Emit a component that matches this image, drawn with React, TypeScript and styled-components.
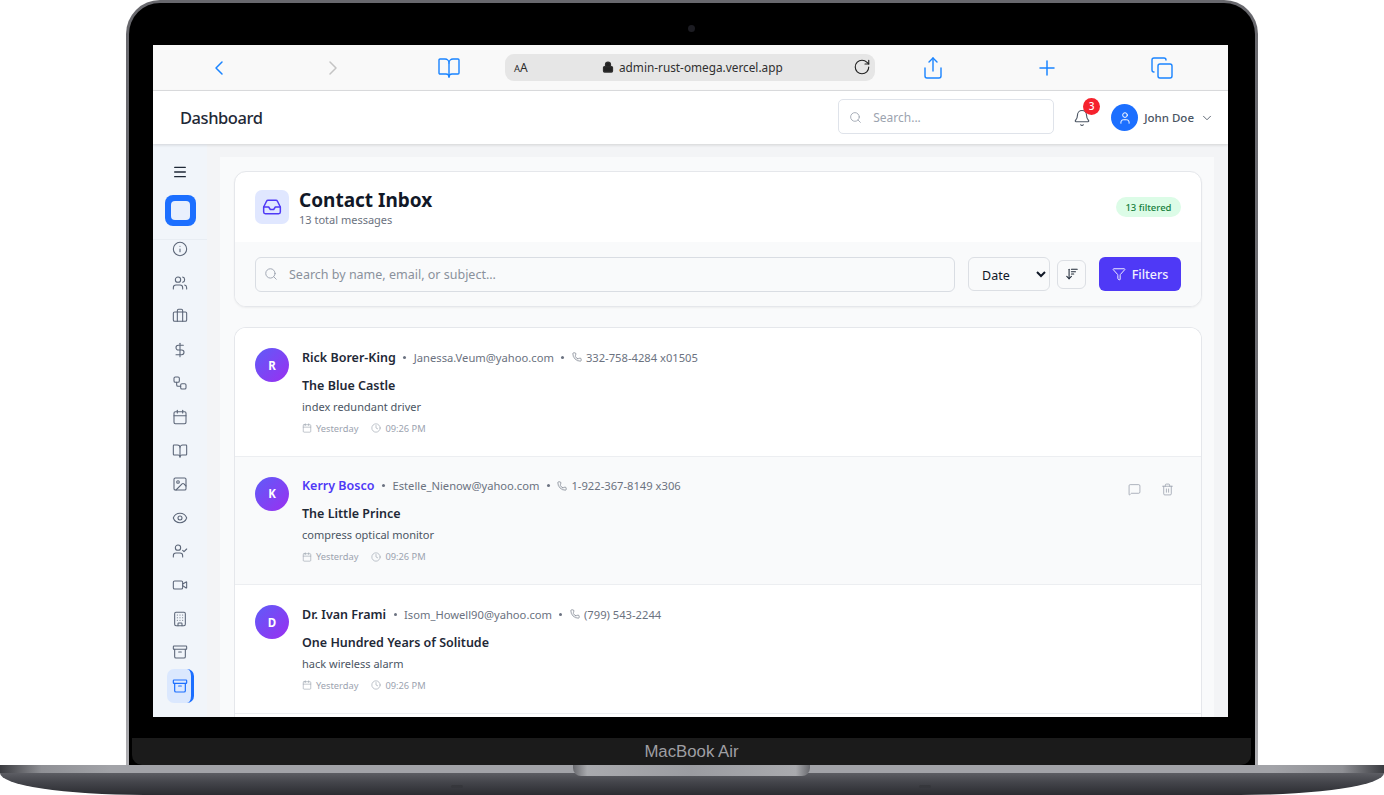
import styled, { createGlobalStyle } from "styled-components";
import {
  Archive, ArrowDownWideNarrow, Bell, BookOpen, Briefcase, Building, Calendar, ChevronDown, ChevronLeft, ChevronRight,
  Clock, Copy, DollarSign, Eye, Filter, Image, Inbox, Info, Lock, Menu, MessageSquare, Phone, Plus, RotateCw, Search,
  Share, Trash2, User, UserCheck, Users, Video, Workflow,
} from "lucide-react";

const GlobalStyle = createGlobalStyle`
  html, body { margin: 0; padding: 0; background: #fff; overflow: hidden; }
  body { font-family: "Noto Sans", "Liberation Sans", sans-serif; }
  * { box-sizing: border-box; }
`;

const Stage = styled.div`
  width: 1384px;
  height: 795px;
  display: flex;
  flex-direction: column;
  align-items: center;
  position: relative;
  overflow: hidden;
`;

const Lid = styled.div`
  width: 1132px;
  height: 765px;
  flex: none;
  border: 3px solid transparent;
  border-bottom: 0;
  border-radius: 34px 34px 0 0;
  background: linear-gradient(#000, #000) padding-box, linear-gradient(180deg, #68686d, #707075 70%, #b0b0b4) border-box;
  padding: 42px 27px 0 24px;
  display: flex;
  flex-direction: column;
  position: relative;
`;

const Camera = styled.span`
  position: absolute;
  top: 22px;
  left: 559px;
  width: 7px;
  height: 7px;
  border-radius: 50%;
  background: #1c1c22;
`;

const Screen = styled.div`
  height: 672px;
  flex: none;
  background: #fff;
  display: flex;
  flex-direction: column;
  overflow: hidden;
`;

const Chin = styled.div`
  margin: 21px -23px 0 -21px;
  height: 27px;
  background: #1b1b1b;
  border-radius: 0 0 10px 10px;
  display: flex;
  align-items: center;
  justify-content: center;
  color: #9f9fa3;
  font-family: "Liberation Sans", sans-serif;
  font-size: 16.8px;
`;

const Base = styled.div`
  width: 1384px;
  height: 30px;
  flex: none;
  position: relative;
`;

const BaseStrip = styled.div`
  height: 8px;
  background: linear-gradient(90deg, #3a3b40 0, #8f9095 3%, #a2a3a8 8%, #a2a3a8 92%, #8f9095 97%, #3a3b40 100%);
`;

const BaseBody = styled.div`
  height: 22px;
  background: linear-gradient(180deg, #5c5d63 0, #45464c 40%, #2b2c31 100%);
  border-radius: 0 0 150px 150px / 0 0 23px 23px;
`;

const Notch = styled.div`
  position: absolute;
  top: 0;
  left: 573px;
  width: 237px;
  height: 11px;
  border-radius: 0 0 8px 8px;
  background: linear-gradient(90deg, #68696e 0, #a9aaae 6%, #9b9ca1 50%, #a9aaae 94%, #68696e 100%);
`;

const Pin = styled.span<{ $left: number }>`
  position: absolute;
  top: 20px;
  left: ${(p) => p.$left}px;
  width: 12px;
  height: 3px;
  border-radius: 2px;
  background: #36373c;
`;

const BrowserBar = styled.div`
  height: 46px;
  flex: none;
  background: #f9f9f9;
  border-bottom: 1px solid #dedfe1;
  display: grid;
  grid-template-columns: 352px 370px 1fr;
  align-items: center;
  color: #1a84ff;
`;

const BarGroup = styled.div<{ $pad: number }>`
  display: flex;
  align-items: center;
  gap: 90px;
  padding-left: ${(p) => p.$pad}px;
`;

const BookIcon = styled(BookOpen)`
  margin-left: 2px;
`;

const TabsIcon = styled(Copy)`
  margin-left: 1px;
`;

const UrlBox = styled.div`
  height: 27px;
  margin-top: -1px;
  background: #e6e6e6;
  border-radius: 9px;
  color: #2b2b2b;
  display: flex;
  align-items: center;
  padding: 0 4px 0 9px;
  font-size: 11.8px;
`;

const AaLabel = styled.span`
  width: 88px;
  flex: none;
  font-size: 12px;
  & small { font-size: 9.5px; }
`;

const UrlText = styled.span`
  display: flex;
  align-items: center;
  gap: 5px;
  flex: 1;
  color: #303030;
`;

const TopHeader = styled.header`
  height: 53px;
  flex: none;
  background: #fff;
  display: flex;
  align-items: center;
  padding: 0 13px 0 27px;
  box-shadow: 0 1px 3px rgba(0, 0, 0, 0.14);
  position: relative;
  z-index: 2;
`;

const PageTitle = styled.h1`
  margin: 0;
  font-size: 16.5px;
  letter-spacing: -0.45px;
  font-weight: 500;
  color: #1f2937;
  flex: 1;
`;

const HeaderSearch = styled.div`
  width: 216px;
  height: 35px;
  margin-bottom: 2px;
  border: 1px solid #dfe3ea;
  border-radius: 5px;
  display: flex;
  align-items: center;
  gap: 11px;
  padding: 2px 10px 0;
  color: #9ca3af;
  font-size: 12px;
`;

const BellWrap = styled.div`
  margin-left: 19px;
  width: 18px;
  height: 18px;
  color: #4b5563;
  position: relative;
`;

const BellBadge = styled.span`
  position: absolute;
  top: -11px;
  left: 10px;
  width: 17px;
  height: 17px;
  border-radius: 50%;
  background: #f5222d;
  color: #fff;
  font-size: 10px;
  font-weight: 500;
  display: flex;
  align-items: center;
  justify-content: center;
`;

const UserMenu = styled.div`
  margin-left: 20px;
  display: flex;
  align-items: center;
  color: #4b5563;
  font-size: 11.5px;
  font-weight: 500;
`;

const UserAvatar = styled.span`
  width: 27px;
  height: 27px;
  border-radius: 50%;
  background: #1c6fff;
  color: #fff;
  display: flex;
  align-items: center;
  justify-content: center;
  margin-right: 6px;
`;

const UserChevron = styled(ChevronDown)`
  margin: 0 1px 0 6px;
`;

const Body = styled.div`
  flex: 1;
  min-height: 0;
  display: flex;
`;

const Sidebar = styled.nav`
  width: 54px;
  flex: none;
  background: #f1f5fa;
  display: flex;
  flex-direction: column;
  align-items: center;
  color: #5b6577;
`;

const SideTop = styled.div`
  width: 100%;
  height: 96px;
  flex: none;
  border-bottom: 1px solid #e8edf3;
  display: flex;
  flex-direction: column;
  align-items: center;
  padding-top: 20px;
  color: #1f2937;
`;

const Logo = styled.div`
  margin-top: 15px;
  width: 31px;
  height: 31px;
  border-radius: 8px;
  background: #1c6fff;
  display: flex;
  align-items: center;
  justify-content: center;
  &::after {
    content: "";
    width: 19px;
    height: 19px;
    border-radius: 4px;
    background: #e9f0fd;
  }
`;

const SideList = styled.div`
  display: flex;
  flex-direction: column;
  align-items: center;
  gap: 17.62px;
  padding-top: 1px;
`;

const SideItem = styled.div<{ $active?: boolean }>`
  width: 16px;
  height: 16px;
  display: flex;
  align-items: center;
  justify-content: center;
  position: relative;
  color: ${(p) => (p.$active ? "#1c6fff" : "inherit")};
  &::before {
    content: ${(p) => (p.$active ? '""' : "none")};
    position: absolute;
    inset: -9px -6px -9px -5px;
    border-radius: 7px;
    background: #dbe8fe;
    border-right: 3px solid #1c6fff;
  }
  & > svg {
    position: relative;
  }
`;

const Main = styled.main`
  flex: 1;
  min-width: 0;
  background: #f3f4f6;
  padding: 13px 14px 0 13px;
  display: flex;
`;

const Content = styled.div`
  flex: 1;
  background: #f9fafb;
  padding: 14px 12px 0 14px;
  display: flex;
  flex-direction: column;
  gap: 20px;
`;

const InboxCard = styled.section`
  height: 136px;
  flex: none;
  background: #fff;
  border: 1px solid #e5e7eb;
  border-radius: 12px;
  overflow: hidden;
  box-shadow: 0 1px 2px rgba(0, 0, 0, 0.05);
  display: flex;
  flex-direction: column;
`;

const InboxHead = styled.div`
  height: 70px;
  flex: none;
  display: flex;
  align-items: center;
  padding: 0 20px;
`;

const InboxIcon = styled.div`
  width: 34px;
  height: 34px;
  border-radius: 7px;
  background: #e0e7ff;
  color: #4f39f6;
  display: flex;
  align-items: center;
  justify-content: center;
  margin-right: 10px;
`;

const InboxTitles = styled.div`
  flex: 1;
  padding-top: 2px;
`;

const InboxTitle = styled.h2`
  margin: 0;
  font-size: 19px;
  line-height: 23px;
  font-weight: 700;
  color: #111827;
`;

const InboxSub = styled.div`
  font-size: 11px;
  line-height: 15px;
  color: #6b7280;
`;

const CountPill = styled.span`
  height: 20px;
  padding: 0 9.5px;
  border-radius: 10px;
  background: #dcfce7;
  color: #15803d;
  font-size: 9.5px;
  font-weight: 500;
  display: flex;
  align-items: center;
`;

const FilterBar = styled.div`
  flex: 1;
  background: #f9fafb;
  display: flex;
  align-items: center;
  padding: 0 20px;
`;

const SearchField = styled.div`
  flex: 1;
  height: 35px;
  border: 1px solid #d9dde3;
  border-radius: 6px;
  display: flex;
  align-items: center;
  gap: 11px;
  padding: 0 8px;
  color: #8a919c;
  font-size: 12.5px;
  background: #f9fafb;
`;

const SortSelect = styled.select`
  width: 82px;
  height: 34px;
  margin-left: 13px;
  border: 1px solid #dcdfe4;
  border-radius: 6px;
  background: #f9fafb;
  color: #111827;
  font-family: inherit;
  font-size: 12.5px;
  padding: 2px 9px 0;
`;

const SortButton = styled.button`
  width: 29px;
  height: 29px;
  margin-left: 7px;
  border: 1px solid #dcdfe4;
  border-radius: 6px;
  background: #f9fafb;
  color: #1f2937;
  display: flex;
  align-items: center;
  justify-content: center;
  padding: 0;
`;

const FilterButton = styled.button`
  width: 82px;
  height: 34px;
  margin-left: 13px;
  border: 0;
  border-radius: 6px;
  background: #4f39f6;
  color: #f2f0ff;
  font-family: inherit;
  font-size: 12.5px;
  font-weight: 500;
  display: flex;
  align-items: center;
  justify-content: center;
  gap: 6px;
  padding: 0;
`;

const MessageCard = styled.section`
  flex: 1;
  background: #fff;
  border: 1px solid #e5e7eb;
  border-bottom: 0;
  border-radius: 12px 12px 0 0;
  overflow: hidden;
`;

const Row = styled.article<{ $hover?: boolean }>`
  height: 128.5px;
  padding: 20px;
  display: flex;
  gap: 13px;
  background: ${(p) => (p.$hover ? "#f9fafb" : "#fff")};
  border-bottom: 1px solid #eceef1;
  position: relative;
`;

const Avatar = styled.span`
  width: 34px;
  height: 34px;
  flex: none;
  border-radius: 50%;
  background: linear-gradient(135deg, #5f5cf8, #9a2ff0);
  color: #fff;
  font-size: 11.5px;
  font-weight: 700;
  display: flex;
  align-items: center;
  justify-content: center;
`;

const RowBody = styled.div`
  display: flex;
  flex-direction: column;
  min-width: 0;
`;

const TopLine = styled.div`
  height: 20px;
  display: flex;
  align-items: center;
  font-size: 11.2px;
  color: #6b7280;
`;

const SenderName = styled.span<{ $hover?: boolean }>`
  font-size: 12.5px;
  font-weight: 600;
  color: ${(p) => (p.$hover ? "#4f39f6" : "#1f2937")};
`;

const Dot = styled.span`
  width: 3px;
  height: 3px;
  border-radius: 50%;
  background: #6b7280;
  margin: 0 7.5px;
`;

const PhoneText = styled.span`
  display: flex;
  align-items: center;
  gap: 4px;
`;

const Subject = styled.div`
  margin-top: 9px;
  line-height: 20px;
  font-size: 12.5px;
  font-weight: 600;
  color: #1f2937;
`;

const Preview = styled.div`
  margin-top: 2px;
  line-height: 18px;
  font-size: 11px;
  color: #4b5563;
`;

const MetaLine = styled.div`
  margin-top: 5px;
  display: flex;
  align-items: center;
  gap: 4px;
  height: 16px;
  color: #9ca3af;
  font-size: 9.3px;
`;

const MetaGap = styled.span`
  width: 5px;
`;

const RowActions = styled.div`
  position: absolute;
  top: 26px;
  right: 27px;
  display: flex;
  gap: 20px;
  color: #9ca3af;
`;

const sideIcons = [Info, Users, Briefcase, DollarSign, Workflow, Calendar, BookOpen, Image, Eye, UserCheck, Video, Building, Archive];

const messages = [
  { name: "Rick Borer-King", email: "Janessa.Veum@yahoo.com", phone: "332-758-4284 x01505", subject: "The Blue Castle", preview: "index redundant driver" },
  { name: "Kerry Bosco", email: "Estelle_Nienow@yahoo.com", phone: "1-922-367-8149 x306", subject: "The Little Prince", preview: "compress optical monitor", hover: true },
  { name: "Dr. Ivan Frami", email: "Isom_Howell90@yahoo.com", phone: "(799) 543-2244", subject: "One Hundred Years of Solitude", preview: "hack wireless alarm" },
];

export default function App() {
  return (
    <Stage>
      <GlobalStyle />
      <Lid>
        <Camera />
        <Screen>
          <BrowserBar>
            <BarGroup $pad={54}>
              <ChevronLeft size={24} strokeWidth={1.5} />
              <ChevronRight size={24} strokeWidth={1.5} color="#c4c4c4" />
              <BookIcon size={24} strokeWidth={1.4} />
            </BarGroup>
            <UrlBox>
              <AaLabel>
                <small>A</small>A
              </AaLabel>
              <UrlText>
                <Lock size={12} strokeWidth={2.5} fill="#222" />
                admin-rust-omega.vercel.app
              </UrlText>
              <RotateCw size={18} strokeWidth={1.5} color="#222" />
            </UrlBox>
            <BarGroup $pad={46}>
              <Share size={24} strokeWidth={1.4} />
              <Plus size={24} strokeWidth={1.5} />
              <TabsIcon size={24} strokeWidth={1.4} />
            </BarGroup>
          </BrowserBar>
          <TopHeader>
            <PageTitle>Dashboard</PageTitle>
            <HeaderSearch>
              <Search size={13} strokeWidth={1.6} />
              Search...
            </HeaderSearch>
            <BellWrap>
              <Bell size={18} strokeWidth={1.5} />
              <BellBadge>3</BellBadge>
            </BellWrap>
            <UserMenu>
              <UserAvatar>
                <User size={14} strokeWidth={1.7} />
              </UserAvatar>
              John Doe
              <UserChevron size={14} strokeWidth={1.5} />
            </UserMenu>
          </TopHeader>
          <Body>
            <Sidebar>
              <SideTop>
                <Menu size={16} strokeWidth={2} />
                <Logo />
              </SideTop>
              <SideList>
                {sideIcons.map((Icon, i) => (
                  <SideItem key={i}>
                    <Icon size={16} strokeWidth={1.6} />
                  </SideItem>
                ))}
                <SideItem $active>
                  <Archive size={16} strokeWidth={1.8} />
                </SideItem>
              </SideList>
            </Sidebar>
            <Main>
              <Content>
                <InboxCard>
                  <InboxHead>
                    <InboxIcon>
                      <Inbox size={20} strokeWidth={1.8} />
                    </InboxIcon>
                    <InboxTitles>
                      <InboxTitle>Contact Inbox</InboxTitle>
                      <InboxSub>13 total messages</InboxSub>
                    </InboxTitles>
                    <CountPill>13 filtered</CountPill>
                  </InboxHead>
                  <FilterBar>
                    <SearchField>
                      <Search size={14} strokeWidth={1.6} color="#9ca3af" />
                      Search by name, email, or subject...
                    </SearchField>
                    <SortSelect defaultValue="date">
                      <option value="date">Date</option>
                    </SortSelect>
                    <SortButton>
                      <ArrowDownWideNarrow size={14} strokeWidth={1.8} />
                    </SortButton>
                    <FilterButton>
                      <Filter size={14} strokeWidth={1.7} />
                      Filters
                    </FilterButton>
                  </FilterBar>
                </InboxCard>
                <MessageCard>
                  {messages.map((m) => (
                    <Row key={m.email} $hover={m.hover}>
                      <Avatar>{m.name[0]}</Avatar>
                      <RowBody>
                        <TopLine>
                          <SenderName $hover={m.hover}>{m.name}</SenderName>
                          <Dot />
                          {m.email}
                          <Dot />
                          <PhoneText>
                            <Phone size={10} strokeWidth={1.6} />
                            {m.phone}
                          </PhoneText>
                        </TopLine>
                        <Subject>{m.subject}</Subject>
                        <Preview>{m.preview}</Preview>
                        <MetaLine>
                          <Calendar size={10} strokeWidth={1.5} />
                          Yesterday
                          <MetaGap />
                          <Clock size={10} strokeWidth={1.5} />
                          09:26 PM
                        </MetaLine>
                      </RowBody>
                      {m.hover && (
                        <RowActions>
                          <MessageSquare size={13} strokeWidth={1.5} />
                          <Trash2 size={13} strokeWidth={1.5} />
                        </RowActions>
                      )}
                    </Row>
                  ))}
                </MessageCard>
              </Content>
            </Main>
          </Body>
        </Screen>
        <Chin>MacBook Air</Chin>
      </Lid>
      <Base>
        <BaseStrip />
        <BaseBody />
        <Notch />
        <Pin $left={451} />
        <Pin $left={919} />
      </Base>
    </Stage>
  );
}
